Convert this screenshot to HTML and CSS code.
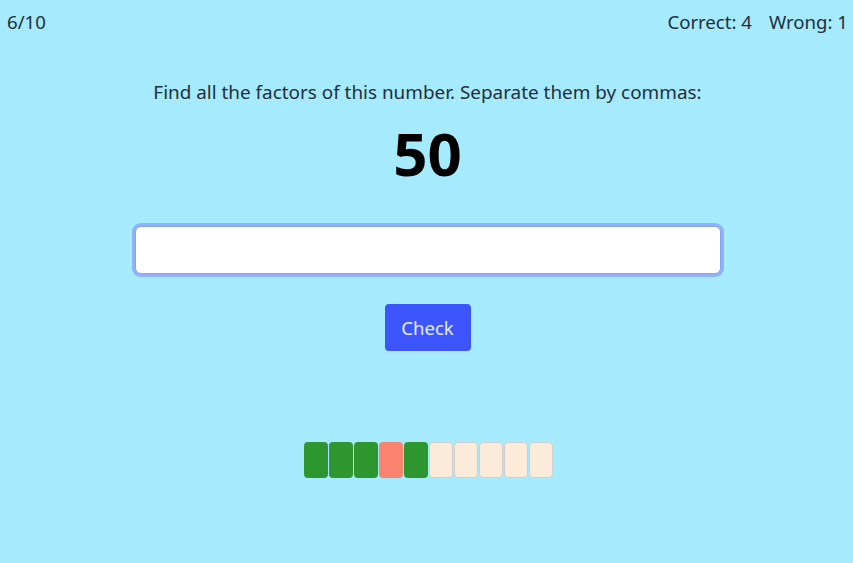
FILE: index.html
```
<!DOCTYPE html>
<html>
<head>
<meta charset="utf-8">
<link rel="stylesheet" href="styles.css">
</head>
<body>
<div class="top">
  <div class="progress">6/10</div>
  <div class="score"><span>Correct: 4</span><span>Wrong: 1</span></div>
</div>
<div class="main">
  <p class="prompt">Find all the factors of this number. Separate them by commas:</p>
  <div class="number">50</div>
  <input class="answer" type="text">
  <button class="check">Check</button>
  <div class="tiles">
    <div class="tile ok"></div>
    <div class="tile ok"></div>
    <div class="tile ok"></div>
    <div class="tile bad"></div>
    <div class="tile ok"></div>
    <div class="tile todo"></div>
    <div class="tile todo"></div>
    <div class="tile todo"></div>
    <div class="tile todo"></div>
    <div class="tile todo"></div>
  </div>
</div>
</body>
</html>
```
FILE: styles.css
```
html, body { margin: 0; padding: 0; }
body {
  background: #a6eafe;
  font-family: "Noto Sans", "Open Sans", sans-serif;
  color: #1f2f3a;
  width: 853px;
  height: 563px;
  overflow: hidden;
}
.top {
  display: flex;
  justify-content: space-between;
  padding: 9px 5px 0 7px;
  font-size: 18.6px;
  line-height: 26px;
}
.score { display: flex; gap: 17px; }
.main {
  display: flex;
  flex-direction: column;
  align-items: center;
  padding-left: 2px;
}
.prompt {
  margin: 44px 0 0;
  font-size: 18.9px;
  line-height: 26px;
}
.number {
  margin-top: 8px;
  font-size: 60px;
  font-weight: 700;
  line-height: 80px;
  color: #000;
}
.answer {
  margin-top: 33px;
  box-sizing: border-box;
  width: 586px;
  height: 48px;
  border: 1px solid #86a4ee;
  border-radius: 6px;
  box-shadow: 0 0 0 3px #8fb2fb;
  background: #fff;
  outline: none;
}
.check {
  margin-top: 30px;
  width: 86px;
  height: 47px;
  border: none;
  border-radius: 4px;
  background: #3d55fd;
  color: #e8ecff;
  font-family: inherit;
  font-size: 18.6px;
}
.tiles {
  margin-top: 91px;
  margin-left: 2px;
  display: flex;
  gap: 1px;
}
.tile {
  box-sizing: border-box;
  width: 24px;
  height: 36px;
  border-radius: 4px;
}
.ok { background: #2e962f; }
.bad { background: #fa8370; }
.todo { background: #fbebd8; border: 1px solid #cfcfcf; }
```
